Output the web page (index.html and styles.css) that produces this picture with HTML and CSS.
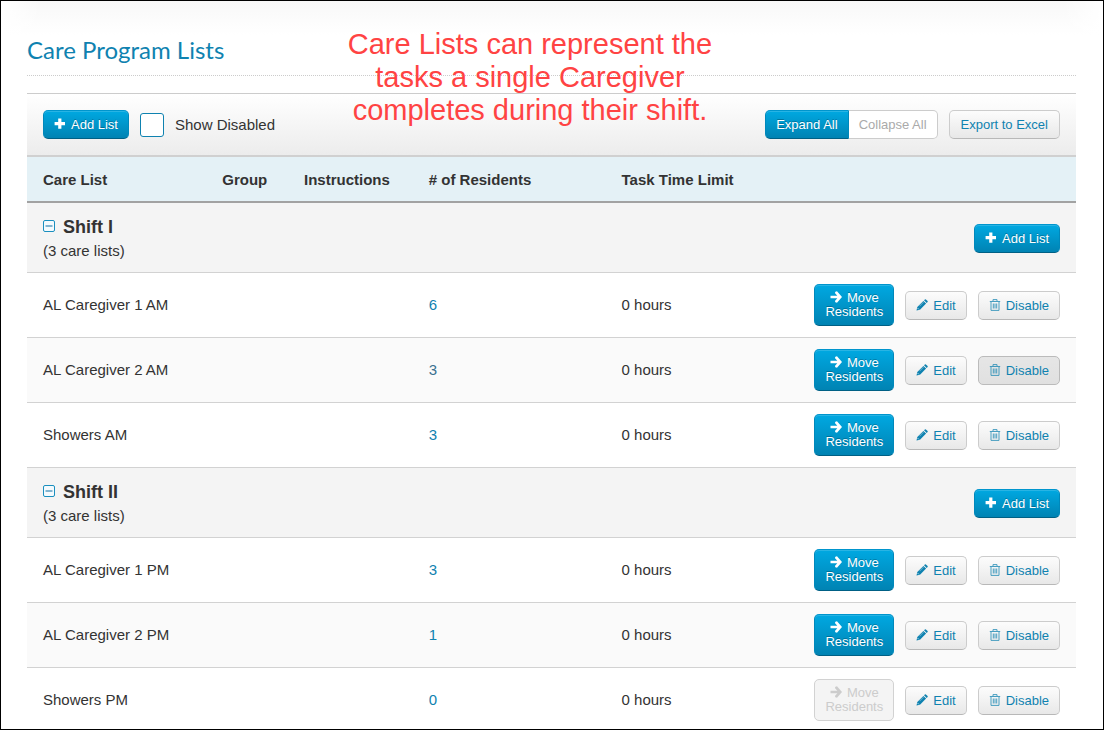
FILE: index.html
```html
<!DOCTYPE html>
<html lang="en">
<head>
<meta charset="utf-8">
<title>Care Program Lists</title>
<link rel="stylesheet" href="styles.css">
</head>
<body>
<svg class="sprite" aria-hidden="true">
  <symbol id="plus" viewBox="0 0 12 12"><path d="M4.200 .6h3.200v3.400h3.600v3.200H7.400v3.600H4.200V7.200H.6V4h3.600z"/></symbol>
  <symbol id="arrow" viewBox="0 0 12 12"><path d="M5.400.7 7 .3l5 5.700-5 5.700-1.600-.4-.5-1.300L7.300 7.300H.5V4.700h6.800L4.900 2z"/></symbol>
  <symbol id="pencil" viewBox="0 0 12 12"><path d="M.5 11.500 1.300 8 7.400 1.900l2.700 2.700L4 10.700zM8 1.300 8.900.4q.5-.4 1 0l1.700 1.700q.4.500 0 1L10.700 4z"/><path d="m1.700 9.200 1.100 1.100" stroke="#fff" stroke-width=".8"/><path d="m3.500 7.200 4-4" stroke="#fff" stroke-width=".4"/></symbol>
  <symbol id="trash" viewBox="0 0 12 12"><path d="M.8 2.500h10.400M4 2.300V.6h4v1.700M2 3v8.400h8V3M4.300 4.500v5M6 4.500v5M7.700 4.500v5" fill="none" stroke="currentColor"/></symbol>
  <symbol id="minus" viewBox="0 0 12 12"><rect x=".5" y=".5" width="11" height="11" rx="1.500" fill="#f4fafd" stroke="#1a8fbf"/><path d="M2.500 6h7" stroke="#5a9dc0" stroke-width="1.500"/></symbol>
</svg>
<main class="page">
  <h1 class="title">Care Program Lists</h1>
  <section class="panel">
    <div class="toolbar">
      <button class="btn primary"><svg class="icon"><use href="#plus"/></svg>Add List</button>
      <label class="toggle"><input class="check" type="checkbox">Show Disabled</label>
      <div class="group-buttons">
        <button class="btn primary">Expand All</button><button class="btn muted">Collapse All</button>
      </div>
      <button class="btn export">Export to Excel</button>
    </div>
    <table class="lists">
      <colgroup><col class="col-name"><col class="col-group"><col class="col-instructions"><col class="col-residents"><col class="col-limit"><col></colgroup>
      <thead>
        <tr><th>Care List</th><th>Group</th><th>Instructions</th><th># of Residents</th><th>Task Time Limit</th><td></td></tr>
      </thead>
      <tbody>
        <tr class="shift"><td colspan="5"><button class="collapse" aria-label="Collapse Shift I"><svg class="icon"><use href="#minus"/></svg></button><strong class="shift-name">Shift I</strong><div>(3 care lists)</div></td><td><div class="actions"><button class="btn primary"><svg class="icon"><use href="#plus"/></svg>Add List</button></div></td></tr>
        <tr><td>AL Caregiver 1 AM</td><td></td><td></td><td><a class="count" href="#">6</a></td><td>0 hours</td><td><div class="actions"><button class="btn primary move"><svg class="icon"><use href="#arrow"/></svg>Move<br>Residents</button><button class="btn"><svg class="icon"><use href="#pencil"/></svg>Edit</button><button class="btn"><svg class="icon trash"><use href="#trash"/></svg>Disable</button></div></td></tr>
        <tr class="alt"><td>AL Caregiver 2 AM</td><td></td><td></td><td><a class="count visited" href="#">3</a></td><td>0 hours</td><td><div class="actions"><button class="btn primary move"><svg class="icon"><use href="#arrow"/></svg>Move<br>Residents</button><button class="btn"><svg class="icon"><use href="#pencil"/></svg>Edit</button><button class="btn active"><svg class="icon trash"><use href="#trash"/></svg>Disable</button></div></td></tr>
        <tr><td>Showers AM</td><td></td><td></td><td><a class="count" href="#">3</a></td><td>0 hours</td><td><div class="actions"><button class="btn primary move"><svg class="icon"><use href="#arrow"/></svg>Move<br>Residents</button><button class="btn"><svg class="icon"><use href="#pencil"/></svg>Edit</button><button class="btn"><svg class="icon trash"><use href="#trash"/></svg>Disable</button></div></td></tr>
      </tbody>
      <tbody>
        <tr class="shift"><td colspan="5"><button class="collapse" aria-label="Collapse Shift II"><svg class="icon"><use href="#minus"/></svg></button><strong class="shift-name">Shift II</strong><div>(3 care lists)</div></td><td><div class="actions"><button class="btn primary"><svg class="icon"><use href="#plus"/></svg>Add List</button></div></td></tr>
        <tr><td>AL Caregiver 1 PM</td><td></td><td></td><td><a class="count" href="#">3</a></td><td>0 hours</td><td><div class="actions"><button class="btn primary move"><svg class="icon"><use href="#arrow"/></svg>Move<br>Residents</button><button class="btn"><svg class="icon"><use href="#pencil"/></svg>Edit</button><button class="btn"><svg class="icon trash"><use href="#trash"/></svg>Disable</button></div></td></tr>
        <tr class="alt"><td>AL Caregiver 2 PM</td><td></td><td></td><td><a class="count" href="#">1</a></td><td>0 hours</td><td><div class="actions"><button class="btn primary move"><svg class="icon"><use href="#arrow"/></svg>Move<br>Residents</button><button class="btn"><svg class="icon"><use href="#pencil"/></svg>Edit</button><button class="btn"><svg class="icon trash"><use href="#trash"/></svg>Disable</button></div></td></tr>
        <tr><td>Showers PM</td><td></td><td></td><td><a class="count" href="#">0</a></td><td>0 hours</td><td><div class="actions"><button class="btn move" disabled><svg class="icon"><use href="#arrow"/></svg>Move<br>Residents</button><button class="btn"><svg class="icon"><use href="#pencil"/></svg>Edit</button><button class="btn"><svg class="icon trash"><use href="#trash"/></svg>Disable</button></div></td></tr>
      </tbody>
    </table>
  </section>
  <p class="note">Care Lists can represent the<br>tasks a single Caregiver<br>completes during their shift.</p>
</main>
</body>
</html>
```
FILE: styles.css
```css
* { box-sizing: border-box; }
body {
  margin: 0;
  color: #333;
  font: 15px/24px "Liberation Sans", Arial, sans-serif;
}
.sprite { position: absolute; width: 0; height: 0; }
.page {
  position: relative;
  height: 100vh;
  overflow: hidden;
  padding: 32px 27px 0 26px;
  border: 1px solid #000;
  background:
    linear-gradient(to right, #fff, transparent 40px),
    linear-gradient(to left, #fff, transparent 40px),
    linear-gradient(#f8f8f8, #fff 34px);
}
.title {
  margin: 0 0 17px;
  padding-bottom: 8px;
  border-bottom: 1px dotted #ccc;
  color: #0f82b0;
  font: 24px/34px Lato, sans-serif;
}
.panel { border-top: 1px solid #ccc; }
.toolbar {
  display: flex;
  align-items: center;
  gap: 11px;
  padding: 16px;
  border-bottom: 2px solid #d0d0d0;
  background: linear-gradient(#fff, #ececec);
}
.toggle { display: flex; align-items: center; gap: 11px; height: 29px; }
.check {
  appearance: none;
  width: 24px;
  height: 24px;
  margin: 0;
  border: 1px solid #0f82b0;
  border-radius: 3px;
  background: #fff;
}
.group-buttons { display: flex; margin-left: auto; }
.group-buttons .btn:first-child { border-radius: 5px 0 0 5px; }
.group-buttons .btn:last-child { border-radius: 0 5px 5px 0; border-left: 0; }

.btn {
  padding: 6px 10px;
  border: 1px solid #ccc;
  border-bottom-color: #b8b8b8;
  border-radius: 5px;
  background: linear-gradient(#fcfcfc, #e8e8e8);
  color: #0f82b0;
  font: 13px/15px "Liberation Sans", Arial, sans-serif;
  white-space: nowrap;
}
.btn.primary {
  border-color: #0095cd #0088bb #006085;
  background: linear-gradient(#00a8e1, #0083b3);
  box-shadow: inset 0 1px #28b4e4;
  color: #fff;
  text-shadow: 0 -1px rgba(0, 0, 0, .25);
}
.btn.muted { border-color: #ccc; background: #fff; color: #aaa; }
.btn.export { padding: 6px 11px; }
.btn.active { border-color: #bbb; background: linear-gradient(#e6e6e6, #e0e0e0); }
.btn.move { line-height: 14px; }
.btn:disabled { border-color: #d2d2d2; background: #f4f4f4; color: #ccc; }
.icon { width: 12px; height: 12px; margin-right: 5px; fill: currentColor; vertical-align: -1px; }
.trash { opacity: .75; }
.actions { display: flex; align-items: center; justify-content: flex-end; gap: 11px; }

.lists { width: 100%; border-collapse: separate; border-spacing: 0; }
.col-name { width: 17.1%; }
.col-group { width: 7.8%; }
.col-instructions { width: 11.9%; }
.col-residents { width: 18.4%; }
.col-limit { width: 18.4%; }
.lists th, .lists td {
  height: 65px;
  padding: 0 0 0 16px;
  border-bottom: 1px solid #d2d2d2;
  text-align: left;
  white-space: nowrap;
}
.lists td:last-child { padding-right: 16px; }
.lists thead th, .lists thead td {
  height: 46px;
  padding-top: 2px;
  border-bottom: 2px solid #a2a2a2;
  background: #e4f1f6;
}
.alt { background: #fafafa; }
.lists .shift td { height: 70px; padding-top: 2px; background: #f4f4f4; line-height: 23px; }
.shift-name { font-size: 18px; }
.collapse { margin: 0 8px 0 0; padding: 0; border: 0; background: none; line-height: 12px; vertical-align: 1px; }
.collapse .icon { display: block; margin: 0; }
.count { color: #0f82b0; text-decoration: none; }
.visited { color: #3a7190; }
.note {
  position: absolute;
  top: 27px;
  left: 30%;
  width: 36%;
  margin: 0;
  color: #ff4343;
  font-size: 29px;
  line-height: 33px;
  text-align: center;
  white-space: nowrap;
}
```
